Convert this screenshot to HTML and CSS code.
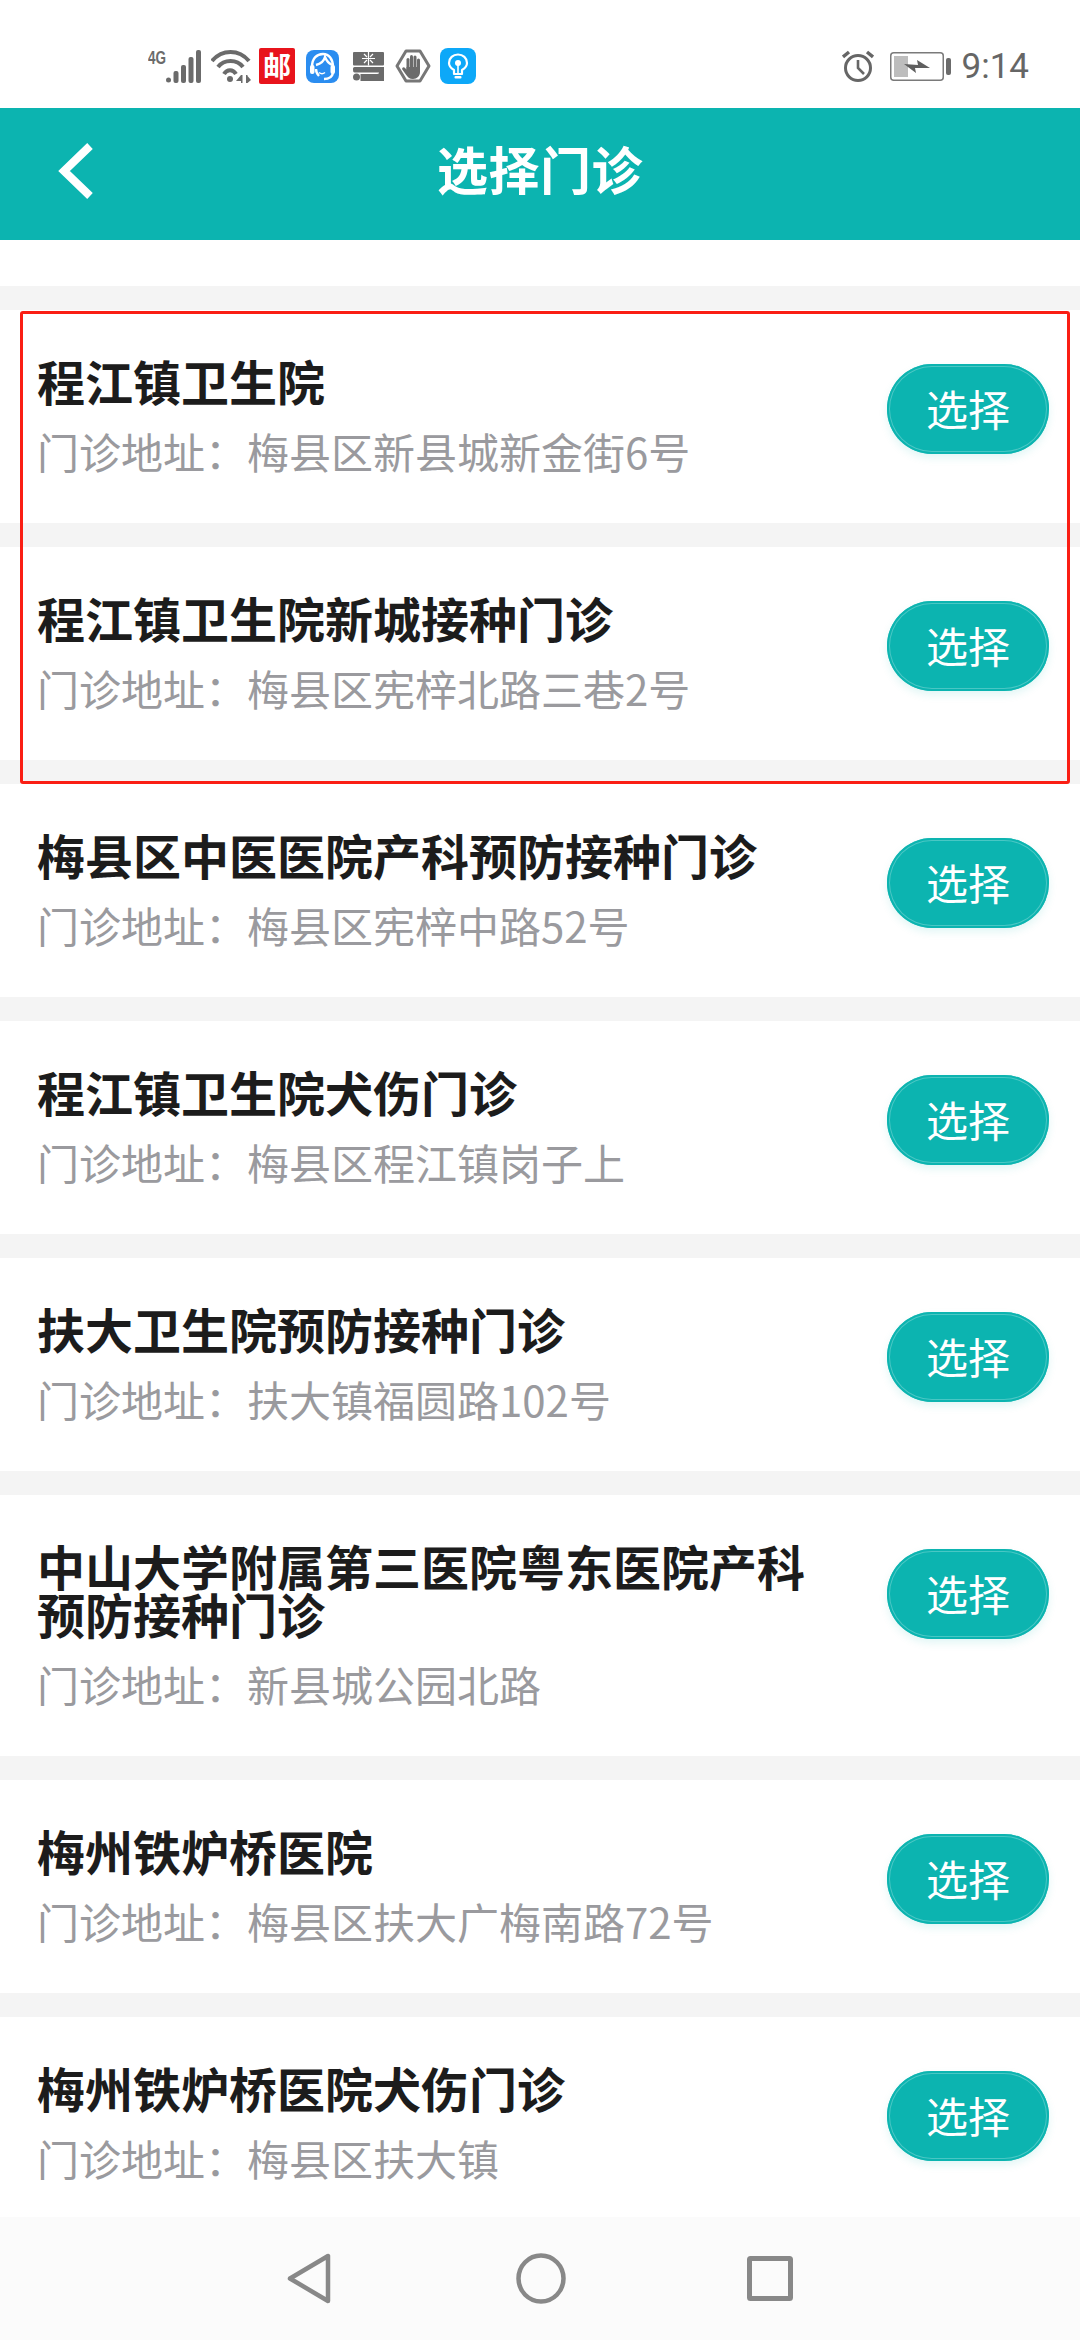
FILE: index.html
```html
<!DOCTYPE html>
<html lang="zh-CN">
<head>
    <meta charset="UTF-8">
    <meta name="viewport" content="width=device-width, initial-scale=1.0">
    <title>选择门诊</title>
    <link rel="stylesheet" href="styles.css">
</head>
<body>
    <div class="app_wrap">
        <div class="status_bar">
            <div class="status_left">
                <span class="net_type">4G</span>
                <svg class="ic_signal" width="35" height="33" viewBox="0 0 35 33" fill="#6b6b6b">
                    <circle cx="2.5" cy="30" r="2.5"/>
                    <rect x="7.5" y="21" width="5" height="12" rx="2"/>
                    <rect x="15" y="15" width="5" height="18" rx="2"/>
                    <rect x="22.5" y="7" width="5" height="26" rx="2"/>
                    <rect x="30" y="0" width="5" height="33" rx="2"/>
                </svg>
                <svg class="ic_wifi" width="40" height="33" viewBox="0 0 40 33" fill="none" stroke="#6b6b6b" stroke-width="4">
                    <path d="M1 11 C11 -1 28 -1 38 11"/>
                    <path d="M7 17 C13 9 26 9 32 17"/>
                    <path d="M13 24 C16 19 22 19 25 24"/>
                    <circle cx="19" cy="29" r="3" fill="#6b6b6b" stroke="none"/>
                    <path d="M30 25 V33 H31.5 V25 Z M30 25 L25 31 H30 Z M35 25 V33 H36.5 V25 Z M36.5 26 L40 30 L36.5 33 Z" fill="#6b6b6b" stroke="none"/>
                </svg>
                <span class="ic_post">邮</span>
                <svg class="ic_app" width="33" height="33" viewBox="0 0 33 33">
                    <rect width="33" height="33" rx="8" fill="#2b8df0"/>
                    <g fill="none" stroke="#fff" stroke-width="2.4">
                        <path d="M6 17 C6 8 11 4 17 4 C23 4 27 9 27 17"/>
                        <path d="M10 15 C14 14 18 11 19 7 C21 12 24 14 26 15"/>
                        <path d="M10 19 C10 22 11 24 13 26"/>
                        <path d="M27 23 C26 28 22 29 18 29"/>
                    </g>
                    <path d="M13 22.5 Q16 25 19 22.5" fill="none" stroke="#fff" stroke-width="1.5"/>
                    <rect x="4" y="15" width="4.5" height="9" rx="2" fill="#fff"/>
                    <rect x="24.5" y="15" width="4.5" height="9" rx="2" fill="#fff"/>
                </svg>
                <svg class="ic_box" width="31" height="29" viewBox="0 0 31 29">
                    <rect width="31" height="13.5" rx="1" fill="#6b6b6b"/>
                    <path d="M15.5 0 V13.5 M9 6.5 H22 M11 2 L14 5 M20 2 L17 5 M11 11 L14 8 M20 11 L17 8" stroke="#fff" stroke-width="1.2"/>
                    <path d="M1.5 15 H31 V29 H7.5 V22 H24 Q26 22 26 20.5 H1.5 Q0 20.5 0 18 V16.5 Q0 15 1.5 15 Z" fill="#6b6b6b"/>
                    <circle cx="3.5" cy="25" r="3.5" fill="#6b6b6b"/>
                </svg>
                <svg class="ic_hand" width="36" height="34" viewBox="0 0 36 34">
                    <path d="M2 17 L11 2 H25 L34 17 L25 32 H11 Z" fill="none" stroke="#777" stroke-width="3" stroke-linejoin="round"/>
                    <g fill="#6b6b6b">
                        <rect x="11.5" y="9" width="3" height="12" rx="1.5"/>
                        <rect x="15" y="6" width="3" height="14" rx="1.5"/>
                        <rect x="18.5" y="6.5" width="3" height="14" rx="1.5"/>
                        <rect x="22" y="9.5" width="3" height="12" rx="1.5"/>
                        <path d="M11.5 18 H25 V23 C25 27 22 30 18 30 C14.5 30 12.5 28 10.5 25 L7 20 Q7.5 17.5 9.5 18.5 L11.5 20.5 Z"/>
                    </g>
                </svg>
                <svg class="ic_bulb" width="36" height="36" viewBox="0 0 36 36">
                    <rect width="36" height="36" rx="8" fill="#0da8f8"/>
                    <path d="M14 26 V22 C10.5 20 9 17.5 9 15 C9 10 13 6.5 18 6.5 C23 6.5 27 10 27 15 C27 17.5 25.5 20 22 22 V26 Z" fill="none" stroke="#fff" stroke-width="2.2" stroke-linejoin="round"/>
                    <circle cx="18" cy="15" r="3" fill="#fff"/>
                    <path d="M18 17 V25" stroke="#fff" stroke-width="1.6"/>
                    <rect x="14.5" y="28" width="7" height="2.4" rx="1" fill="#fff"/>
                </svg>
            </div>
            <div class="status_right">
                <svg class="ic_alarm" width="32" height="32" viewBox="0 0 32 32" fill="none" stroke="#666">
                    <circle cx="16" cy="18" r="12.5" stroke-width="3"/>
                    <path d="M16 10 V18 L22 24" stroke-width="2.6"/>
                    <path d="M1 7 L7 2 M31 7 L25 2" stroke-width="3.4"/>
                </svg>
                <svg class="ic_battery" width="61" height="29" viewBox="0 0 61 29">
                    <rect x="0.75" y="0.75" width="52.5" height="27.5" rx="3" fill="#fff" stroke="#7a7a7a" stroke-width="1.5"/>
                    <rect x="4" y="4" width="14" height="21" fill="#bdbdbd"/>
                    <path d="M14 12 L28 13 L27 8 L40 16 L25 16 L26 21 Z" fill="#5f5f5f"/>
                    <rect x="56" y="6" width="5" height="17" rx="2" fill="#6b6b6b"/>
                </svg>
                <span class="clock">9:14</span>
            </div>
        </div>

        <div class="top_bar">
            <svg class="btn_back" width="36" height="56" viewBox="0 0 36 56" fill="none" stroke="#fff" stroke-width="8">
                <path d="M32 3 L6 28 L32 53"/>
            </svg>
            <h1>选择门诊</h1>
        </div>

        <ul class="clinic_list">
            <li class="clinic_item">
                <div class="clinic_info">
                    <h2>程江镇卫生院</h2>
                    <p>门诊地址：梅县区新县城新金街6号</p>
                </div>
                <button type="button" class="btn_select">选择</button>
            </li>
            <li class="clinic_item">
                <div class="clinic_info">
                    <h2>程江镇卫生院新城接种门诊</h2>
                    <p>门诊地址：梅县区宪梓北路三巷2号</p>
                </div>
                <button type="button" class="btn_select">选择</button>
            </li>
            <li class="clinic_item">
                <div class="clinic_info">
                    <h2>梅县区中医医院产科预防接种门诊</h2>
                    <p>门诊地址：梅县区宪梓中路52号</p>
                </div>
                <button type="button" class="btn_select">选择</button>
            </li>
            <li class="clinic_item">
                <div class="clinic_info">
                    <h2>程江镇卫生院犬伤门诊</h2>
                    <p>门诊地址：梅县区程江镇岗子上</p>
                </div>
                <button type="button" class="btn_select">选择</button>
            </li>
            <li class="clinic_item">
                <div class="clinic_info">
                    <h2>扶大卫生院预防接种门诊</h2>
                    <p>门诊地址：扶大镇福圆路102号</p>
                </div>
                <button type="button" class="btn_select">选择</button>
            </li>
            <li class="clinic_item">
                <div class="clinic_info">
                    <h2>中山大学附属第三医院粤东医院产科预防接种门诊</h2>
                    <p>门诊地址：新县城公园北路</p>
                </div>
                <button type="button" class="btn_select">选择</button>
            </li>
            <li class="clinic_item">
                <div class="clinic_info">
                    <h2>梅州铁炉桥医院</h2>
                    <p>门诊地址：梅县区扶大广梅南路72号</p>
                </div>
                <button type="button" class="btn_select">选择</button>
            </li>
            <li class="clinic_item">
                <div class="clinic_info">
                    <h2>梅州铁炉桥医院犬伤门诊</h2>
                    <p>门诊地址：梅县区扶大镇</p>
                </div>
                <button type="button" class="btn_select">选择</button>
            </li>
        </ul>

        <div class="red_mark"></div>

        <div class="nav_bar">
            <svg class="nav_back" width="44" height="51" viewBox="0 0 44 51" fill="none" stroke="#888" stroke-width="4.5" stroke-linejoin="round">
                <path d="M3 25.5 L41 3 V48 Z"/>
            </svg>
            <svg width="50" height="51" viewBox="0 0 50 51" fill="none" stroke="#888" stroke-width="4.5">
                <ellipse cx="25" cy="25.5" rx="22.5" ry="23"/>
            </svg>
            <svg width="46" height="45" viewBox="0 0 46 45" fill="none" stroke="#888" stroke-width="5" stroke-linejoin="round">
                <rect x="2.5" y="2.5" width="41" height="40" rx="1"/>
            </svg>
        </div>
    </div>
</body>
</html>
```
FILE: styles.css
```css
* {margin:0; padding:0; box-sizing:border-box; list-style:none;}
html, body {width:1080px; height:2340px; overflow:hidden; background:#fff;}
body {font-family:"Noto Sans CJK SC", "Noto Sans", sans-serif;}
.app_wrap {position:relative; width:1080px; height:2340px; display:flex; flex-direction:column;}

.status_bar {
    height:108px; flex:none; display:flex; justify-content:space-between; align-items:center;
    padding:24px 51px 0 148px;
}
.status_left, .status_right {display:flex; align-items:center;}
.net_type {
    flex:none; width:18px; align-self:flex-start; margin-top:1px;
    font:bold 18px/1 "Liberation Sans", sans-serif; color:#6b6b6b;
    transform:scaleX(0.75); transform-origin:left center;
}
.ic_wifi {margin-left:10px;}
.ic_post {
    flex:none; width:36px; height:36px; margin-left:8px; background:#e8141c; color:#fff; border-radius:2px;
    font-size:28px; font-weight:bold; line-height:35px; text-align:center;
}
.ic_app {margin-left:11px;}
.ic_box {margin-left:14px;}
.ic_hand {margin-left:11px;}
.ic_bulb {margin-left:9px;}
.ic_battery {margin-left:16px;}
.clock {margin-left:11px; font:35px/1 Roboto, sans-serif; color:#666;}

.top_bar {
    position:relative; flex:none; height:132px; background:#0cb4b0;
    display:flex; align-items:center; justify-content:center;
}
.top_bar h1 {font-size:51px; line-height:1; font-weight:bold; color:#fff; padding-bottom:12px; letter-spacing:0.5px;}
.btn_back {position:absolute; left:58px; top:35px;}

.clinic_list {flex:1; padding-top:46px; overflow:hidden; background:#fff;}
.clinic_item {
    display:flex; justify-content:space-between; align-items:flex-start;
    border-top:24px solid #f4f4f4; padding:46px 31px 49px 37px; background:#fff;
}
.clinic_info {width:790px;}
.clinic_info h2 {font-size:48px; line-height:48px; font-weight:bold; color:#1c1c1c;}
.clinic_info p {margin-top:24px; font-size:42px; line-height:46px; color:#9a9a9e;}
.btn_select {
    flex:none; width:162px; height:90px; margin-top:8px; padding-bottom:3px;
    border:0; border-radius:45px; background:#0cb4b0; color:#fff;
    font-family:inherit; font-size:42px; cursor:pointer;
    box-shadow:inset 0 0 0 2px #0cb4b0, inset 0 0 0 3px rgba(255,255,255,0.25), 0 4px 8px rgba(12,180,176,0.12);
}

/* 截图上的红框标记 */
.red_mark {
    position:absolute; left:20px; top:311px; width:1050px; height:473px;
    border:3px solid #fa1e14; border-radius:3px;
}

.nav_bar {
    position:absolute; left:0; right:0; bottom:0; height:123px; background:#fbfbfb;
    display:flex; align-items:center; justify-content:center; gap:181px;
}
.nav_back {margin-right:4px;}
```
